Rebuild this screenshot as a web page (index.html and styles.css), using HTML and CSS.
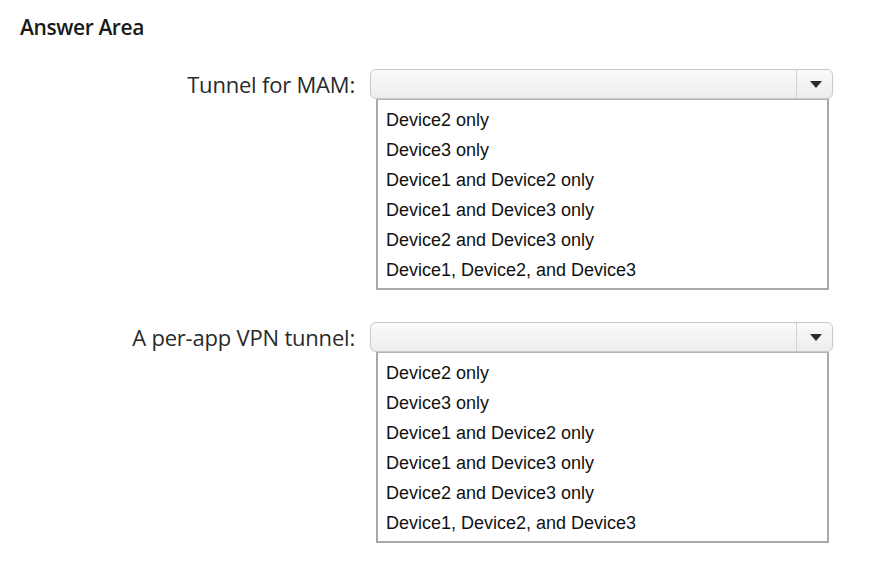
FILE: index.html
```html
<!DOCTYPE html>
<html>
<head>
<meta charset="utf-8">
<link rel="stylesheet" href="styles.css">
</head>
<body>
<div class="page">
  <h1 class="title">Answer Area</h1>
  <div class="question">
    <div class="label">Tunnel for MAM:</div>
    <div class="control">
      <div class="select">
        <div class="select-value"></div>
        <div class="select-btn"><span class="arrow"></span></div>
      </div>
      <ul class="list">
        <li>Device2 only</li>
        <li>Device3 only</li>
        <li>Device1 and Device2 only</li>
        <li>Device1 and Device3 only</li>
        <li>Device2 and Device3 only</li>
        <li>Device1, Device2, and Device3</li>
      </ul>
    </div>
  </div>
  <div class="question q2">
    <div class="label">A per-app VPN tunnel:</div>
    <div class="control">
      <div class="select">
        <div class="select-value"></div>
        <div class="select-btn"><span class="arrow"></span></div>
      </div>
      <ul class="list">
        <li>Device2 only</li>
        <li>Device3 only</li>
        <li>Device1 and Device2 only</li>
        <li>Device1 and Device3 only</li>
        <li>Device2 and Device3 only</li>
        <li>Device1, Device2, and Device3</li>
      </ul>
    </div>
  </div>
</div>
</body>
</html>
```

FILE: styles.css
```css
html, body {
  margin: 0;
  padding: 0;
  background: #ffffff;
}
.page {
  width: 876px;
  height: 573px;
  padding-top: 13px;
  box-sizing: border-box;
}
.title {
  margin: 0 0 28px 20px;
  font-family: "Open Sans", "DejaVu Sans", sans-serif;
  font-weight: 600;
  font-size: 21px;
  line-height: 28px;
  letter-spacing: -0.4px;
  color: #1a1a1a;
}
.question {
  display: flex;
  align-items: flex-start;
}
.q2 {
  margin-top: 32px;
}
.label {
  width: 355px;
  padding-right: 15px;
  text-align: right;
  font-family: "Open Sans", "DejaVu Sans", sans-serif;
  font-size: 22px;
  line-height: 30px;
  letter-spacing: -0.2px;
  color: #2a2a2a;
}
.control {
  width: 463px;
}
.select {
  display: flex;
  height: 30px;
  box-sizing: border-box;
  border: 1px solid #c9c9c9;
  border-radius: 6px;
  background: linear-gradient(#fafafa, #ededed);
  box-shadow: 0 0 1px rgba(0,0,0,0.08);
}
.select-value {
  flex: 1;
}
.select-btn {
  width: 35px;
  border-left: 1px solid #d2d2d2;
  display: flex;
  align-items: center;
  justify-content: center;
}
.arrow {
  width: 0;
  height: 0;
  border-left: 6px solid transparent;
  border-right: 6px solid transparent;
  border-top: 7px solid #2b2b2b;
  margin-left: 3px;
}
.list {
  list-style: none;
  margin: 0 4px 0 6px;
  padding: 5px 0 3px 0;
  border: 2px solid #a9a9a9;
  border-top: 1px solid #b5b5b5;
  font-family: "Liberation Sans", Arial, sans-serif;
  font-size: 18px;
  line-height: 30px;
  color: #111111;
}
.list li {
  padding-left: 8px;
}
```
